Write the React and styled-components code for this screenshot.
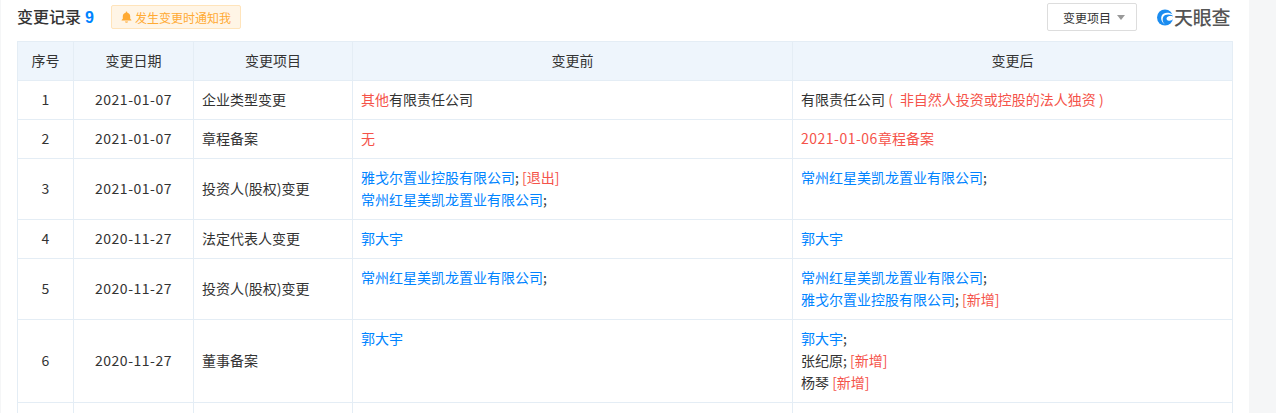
import { Fragment } from "react";
import styled, { createGlobalStyle } from "styled-components";

const GlobalStyle = createGlobalStyle`
  html, body {
    margin: 0;
    padding: 0;
    height: 413px;
    overflow: hidden;
    background: #f5f6f7;
  }
  body {
    font-family: "Noto Sans CJK SC", "Liberation Sans", sans-serif;
    font-size: 14px;
    color: #333;
  }
`;

const Page = styled.div`
  width: 1248px;
  height: 413px;
  box-sizing: border-box;
  margin-left: 1px;
  padding: 0 17px 0 16px;
  background: #fff;
  overflow: hidden;
`;

const TitleBar = styled.div`
  height: 41px;
  display: flex;
  align-items: center;
  padding-bottom: 7px;
  box-sizing: border-box;
`;

const Title = styled.h3`
  margin: 0;
  font-size: 16px;
  line-height: 22px;
  font-weight: 500;
  color: #333;
`;

const Count = styled.span`
  margin-left: 4px;
  color: #0084ff;
  font-family: "Liberation Sans", sans-serif;
  font-weight: 700;
`;

const NotifyButton = styled.div`
  display: flex;
  align-items: center;
  gap: 3px;
  box-sizing: border-box;
  width: 130px;
  height: 24px;
  margin-left: 17px;
  padding-left: 9px;
  background: #fff5e6;
  border: 1px solid #ffe4bb;
  border-radius: 2px;
  color: #ffaa33;
  font-size: 12px;
`;

const Spacer = styled.div`
  flex: 1;
`;

const FilterButton = styled.div`
  display: flex;
  align-items: center;
  gap: 6px;
  box-sizing: border-box;
  width: 90px;
  height: 28px;
  padding-left: 15px;
  border: 1px solid #ddd;
  border-radius: 2px;
  font-size: 12px;
  color: #333;
`;

const Caret = styled.span`
  width: 0;
  height: 0;
  border-left: 4px solid transparent;
  border-right: 4px solid transparent;
  border-top: 5px solid #999;
`;

const Logo = styled.div`
  display: flex;
  align-items: center;
  gap: 1px;
  width: 95px;
  padding-left: 20px;
  box-sizing: border-box;
  color: #555;
  font-size: 19px;
  line-height: 22px;
  font-weight: 500;
  letter-spacing: -0.3px;
`;

const Table = styled.table`
  width: 1215px;
  border-collapse: collapse;
  table-layout: fixed;
`;

const HeadCell = styled.th`
  height: 39px;
  padding: 0 0 2px;
  box-sizing: border-box;
  background: #eef5fc;
  border: 1px solid #e4edf5;
  font-weight: 400;
  font-size: 14px;
  color: #333;
  text-align: center;
`;

const Cell = styled.td`
  height: ${(p) => p.$height}px;
  padding: ${(p) => (p.$top ? "7px 8px 0" : "0 8px 2px")};
  box-sizing: border-box;
  border: 1px solid #e4edf5;
  font-size: 14px;
  line-height: 22px;
  vertical-align: ${(p) => (p.$top ? "top" : "middle")};
  text-align: ${(p) => (p.$center ? "center" : "left")};
  color: #333;
`;

const Digits = styled.span`
  letter-spacing: 0.5px;
`;

const Line = styled.div`
  white-space: nowrap;
`;

const Link = styled.span`
  color: #0084ff;
`;

const Red = styled.span`
  color: #f5534a;
`;

function Company({ name, tag }) {
  return (
    <Line>
      <Link>{name}</Link>; {tag && <Red>[{tag}]</Red>}
    </Line>
  );
}

const YGE = "雅戈尔置业控股有限公司";
const CZ = "常州红星美凯龙置业有限公司";

const rows = [
  {
    no: 1,
    date: "2021-01-07",
    item: "企业类型变更",
    height: 39,
    before: (
      <Line>
        <Red>其他</Red>有限责任公司
      </Line>
    ),
    after: (
      <Line>
        有限责任公司<Red>{"\u00a0(\u2002"}非自然人投资或控股的法人独资{"\u00a0)"}</Red>
      </Line>
    ),
  },
  {
    no: 2,
    date: "2021-01-07",
    item: "章程备案",
    height: 39,
    before: <Red>无</Red>,
    after: (
      <Red>
        <Digits>2021-01-06</Digits>章程备案
      </Red>
    ),
  },
  {
    no: 3,
    date: "2021-01-07",
    item: "投资人(股权)变更",
    height: 61,
    top: true,
    before: (
      <Fragment>
        <Company name={YGE} tag="退出" />
        <Company name={CZ} />
      </Fragment>
    ),
    after: <Company name={CZ} />,
  },
  {
    no: 4,
    date: "2020-11-27",
    item: "法定代表人变更",
    height: 39,
    before: <Link>郭大宇</Link>,
    after: <Link>郭大宇</Link>,
  },
  {
    no: 5,
    date: "2020-11-27",
    item: "投资人(股权)变更",
    height: 61,
    top: true,
    before: <Company name={CZ} />,
    after: (
      <Fragment>
        <Company name={CZ} />
        <Company name={YGE} tag="新增" />
      </Fragment>
    ),
  },
  {
    no: 6,
    date: "2020-11-27",
    item: "董事备案",
    height: 83,
    top: true,
    before: <Link>郭大宇</Link>,
    after: (
      <Fragment>
        <Company name="郭大宇" />
        <Line>
          张纪原; <Red>[新增]</Red>
        </Line>
        <Line>
          杨琴 <Red>[新增]</Red>
        </Line>
      </Fragment>
    ),
  },
  { no: "", date: "", item: "", height: 39, before: "", after: "" },
];

function App() {
  return (
    <Fragment>
      <GlobalStyle />
      <Page>
        <TitleBar>
          <Title>
            变更记录<Count>9</Count>
          </Title>
          <NotifyButton>
            <svg width="11" height="12" viewBox="0 0 11 12" fill="#ffaa33">
              <path d="M5.5 0.5c.5 0 .8.3.8.8v.4c1.8.4 2.9 1.8 2.9 3.6v2.4l1.2 1.4v.5H.6v-.5l1.2-1.4V5.3c0-1.8 1.1-3.2 2.9-3.6v-.4c0-.5.3-.8.8-.8z" />
              <path d="M4 10.5h3c0 .8-.7 1.2-1.5 1.2S4 11.3 4 10.5z" />
            </svg>
            发生变更时通知我
          </NotifyButton>
          <Spacer />
          <FilterButton>
            变更项目
            <Caret />
          </FilterButton>
          <Logo>
            <svg width="16" height="17" viewBox="0 0 16 17" style={{ flex: "none" }}>
              <circle cx="8" cy="8.5" r="8" fill="#1a8cf0" />
              <path d="M16 5.5C11.500 2.800 6.500 3.300 4.800 6.500 3.300 9.500 4.500 13 8 15.500 5.500 13.500 5 10 6.300 7.700 8 5 12 4.800 16 6.500z" fill="#fff" />
              <path d="M16 7.500c-2.600-.9-5.400-.4-6.300 1.200-.7 1.400.4 2.800 2.300 3 1.700.2 3.200-.6 4-1.700z" fill="#fff" />
            </svg>
            天眼查
          </Logo>
        </TitleBar>
        <Table>
          <colgroup>
            <col width="56" />
            <col width="120" />
            <col width="159" />
            <col width="440" />
            <col width="440" />
          </colgroup>
          <thead>
            <tr>
              <HeadCell>序号</HeadCell>
              <HeadCell>变更日期</HeadCell>
              <HeadCell>变更项目</HeadCell>
              <HeadCell>变更前</HeadCell>
              <HeadCell>变更后</HeadCell>
            </tr>
          </thead>
          <tbody>
            {rows.map((row, idx) => (
              <tr key={idx}>
                <Cell $height={row.height} $center>
                  {row.no}
                </Cell>
                <Cell $height={row.height} $center>
                  <Digits>{row.date}</Digits>
                </Cell>
                <Cell $height={row.height}>{row.item}</Cell>
                <Cell $height={row.height} $top={row.top}>
                  {row.before}
                </Cell>
                <Cell $height={row.height} $top={row.top}>
                  {row.after}
                </Cell>
              </tr>
            ))}
          </tbody>
        </Table>
      </Page>
    </Fragment>
  );
}

export default App;
